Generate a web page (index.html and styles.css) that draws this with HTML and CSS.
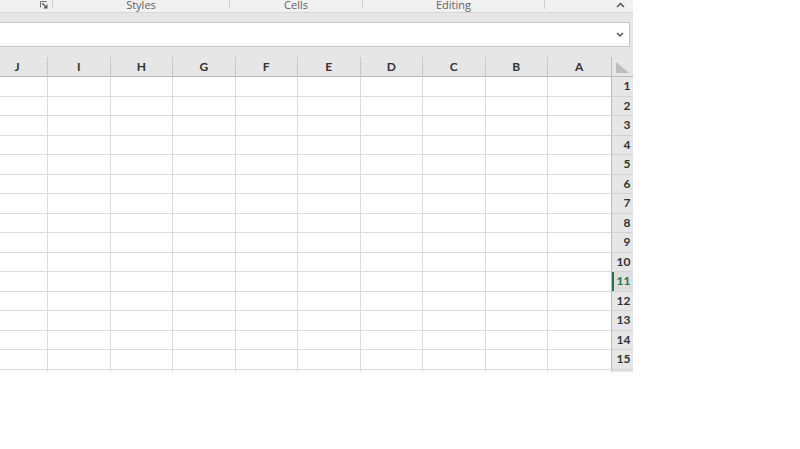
FILE: index.html
```html
<!DOCTYPE html>
<html>
<head>
<meta charset="utf-8">
<link rel="stylesheet" href="styles.css">
</head>
<body>
<div class="app">
  <div class="ribbon">
    <div class="group first">
      <svg class="launcher" width="8" height="8" viewBox="0 0 8 8"><path d="M0.5 6.5V0.5H6.5" fill="none" stroke="#777" stroke-width="1"/><path d="M2.2 2.2L5.5 5.5" stroke="#555" stroke-width="1.3"/><path d="M7.5 3.2V7.5H3.2Z" fill="#555"/></svg>
    </div>
    <div class="sep"></div>
    <div class="group styles"><span class="label">Styles</span></div>
    <div class="sep"></div>
    <div class="group cells"><span class="label">Cells</span></div>
    <div class="sep"></div>
    <div class="group editing"><span class="label">Editing</span></div>
    <div class="sep"></div>
    <div class="group last">
      <svg class="caret" width="9" height="6" viewBox="0 0 9 6"><path d="M1 5L4.5 1.5L8 5" fill="none" stroke="#555" stroke-width="1.5"/></svg>
    </div>
  </div>
  <div class="band"></div>
  <div class="formula-row">
    <div class="formula">
      <svg class="chev" width="8" height="5" viewBox="0 0 8 5"><path d="M1 1L4 4L7 1" fill="none" stroke="#555" stroke-width="1.5"/></svg>
    </div>
  </div>
  <div class="sheet">
    <div class="row head">
      <span class="colJ">J</span><span>I</span><span>H</span><span>G</span><span>F</span><span>E</span><span>D</span><span>C</span><span>B</span><span class="colA">A</span>
      <span class="corner"><svg width="16" height="13" viewBox="0 0 16 13"><path d="M2 1V12H15Z" fill="#bdbdbd"/></svg></span>
    </div>
    <div class="row"><span></span><span></span><span></span><span></span><span></span><span></span><span></span><span></span><span></span><span class="colA"></span><b class="num">1</b></div>
    <div class="row"><span></span><span></span><span></span><span></span><span></span><span></span><span></span><span></span><span></span><span class="colA"></span><b class="num">2</b></div>
    <div class="row"><span></span><span></span><span></span><span></span><span></span><span></span><span></span><span></span><span></span><span class="colA"></span><b class="num">3</b></div>
    <div class="row"><span></span><span></span><span></span><span></span><span></span><span></span><span></span><span></span><span></span><span class="colA"></span><b class="num">4</b></div>
    <div class="row"><span></span><span></span><span></span><span></span><span></span><span></span><span></span><span></span><span></span><span class="colA"></span><b class="num">5</b></div>
    <div class="row"><span></span><span></span><span></span><span></span><span></span><span></span><span></span><span></span><span></span><span class="colA"></span><b class="num">6</b></div>
    <div class="row"><span></span><span></span><span></span><span></span><span></span><span></span><span></span><span></span><span></span><span class="colA"></span><b class="num">7</b></div>
    <div class="row"><span></span><span></span><span></span><span></span><span></span><span></span><span></span><span></span><span></span><span class="colA"></span><b class="num">8</b></div>
    <div class="row"><span></span><span></span><span></span><span></span><span></span><span></span><span></span><span></span><span></span><span class="colA"></span><b class="num">9</b></div>
    <div class="row"><span></span><span></span><span></span><span></span><span></span><span></span><span></span><span></span><span></span><span class="colA"></span><b class="num">10</b></div>
    <div class="row"><span></span><span></span><span></span><span></span><span></span><span></span><span></span><span></span><span></span><span class="colA"></span><b class="num sel">11</b></div>
    <div class="row"><span></span><span></span><span></span><span></span><span></span><span></span><span></span><span></span><span></span><span class="colA"></span><b class="num">12</b></div>
    <div class="row"><span></span><span></span><span></span><span></span><span></span><span></span><span></span><span></span><span></span><span class="colA"></span><b class="num">13</b></div>
    <div class="row"><span></span><span></span><span></span><span></span><span></span><span></span><span></span><span></span><span></span><span class="colA"></span><b class="num">14</b></div>
    <div class="row"><span></span><span></span><span></span><span></span><span></span><span></span><span></span><span></span><span></span><span class="colA"></span><b class="num">15</b></div>
    <div class="row"><span></span><span></span><span></span><span></span><span></span><span></span><span></span><span></span><span></span><span class="colA"></span><b class="num">16</b></div>
  </div>
</div>
</body>
</html>
```
FILE: styles.css
```css
* { box-sizing: border-box; }
body { margin: 0; background: #fff; font-family: "Lato", "Liberation Sans", sans-serif; }
.app { width: 633px; overflow: hidden; }

.ribbon {
  display: flex;
  height: 13px;
  background: #f1f1f1;
  border-bottom: 1px solid #d8d8d8;
  overflow: hidden;
  font-family: "Open Sans", "Liberation Sans", sans-serif;
  font-size: 11px;
  color: #5f5f5f;
}
.group { display: flex; justify-content: center; align-items: flex-start; }
.label { line-height: 10px; margin-top: 0; }
.first { width: 52px; justify-content: flex-end; padding-right: 4px; padding-top: 1px; }
.styles { width: 176px; }
.cells { width: 132px; }
.editing { width: 181px; }
.last { flex: 1; justify-content: flex-end; padding-right: 8px; padding-top: 2px; }
.sep { width: 1px; height: 9px; background: #cfcfcf; }

.band { height: 9px; background: #e6e6e6; }
.formula-row { background: #e6e6e6; padding: 0 3px 10px 0; }
.formula {
  height: 25px;
  border: 1px solid #c8c8c8;
  border-left: none;
  background: #fff;
  display: flex;
  align-items: center;
  justify-content: flex-end;
  padding-right: 5px;
}

.sheet { height: 315px; overflow: hidden; }
.row {
  display: grid;
  grid-template-columns: 48px repeat(9, 62.5px) 22px;
  grid-template-rows: 100%;
  height: 20px;
  overflow: hidden;
}
.row:nth-child(odd) { height: 19px; }
.row > span { border-right: 1px solid #dadada; border-bottom: 1px solid #dadada; background: #fff; }
.row > span.colA { border-right: none; }
.num {
  font-weight: bold;
  font-size: 12px;
  line-height: 18px;
  text-align: right;
  padding-right: 2px;
  color: #333;
  background: #e6e6e6;
  border-left: 1px solid #bcbcbc;
  border-bottom: 1px solid #d2d2d2;
}
.num.sel { color: #217346; background: #dedede; box-shadow: inset 2px 0 0 #217346; }

.row.head { height: 20px; }
.row.head > span {
  background: #e6e6e6;
  border-right: 1px solid #c9c9c9;
  border-bottom: 1px solid #b8b8b8;
  text-align: center;
  font-size: 12px;
  font-weight: bold;
  line-height: 19px;
  color: #333;
}
.row.head > span.colJ { padding-right: 13px; }
.row.head > span.colA { border-right: none; }
.row.head > span.corner { border-left: 1px solid #bcbcbc; border-right: none; display: flex; align-items: flex-start; padding-top: 4px; padding-left: 2px; }
.corner svg { display: block; }
```
